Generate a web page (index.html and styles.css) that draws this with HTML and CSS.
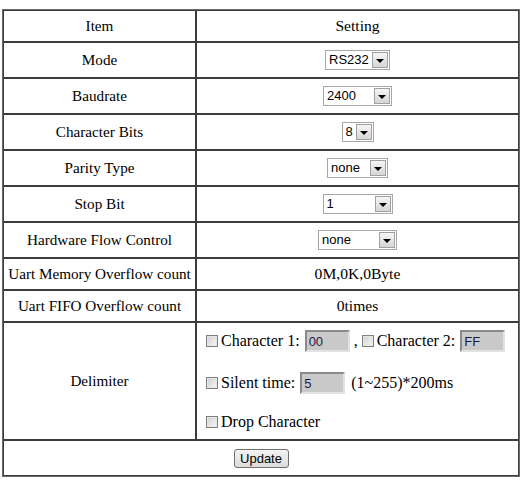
FILE: index.html
```html
<!DOCTYPE html>
<html lang="en">
<head>
  <meta charset="UTF-8">
  <title>Serial Port Setting</title>
  <link rel="stylesheet" href="styles.css">
</head>
<body>
  <form class="uart-form" onsubmit="return false;">
    <table class="setting-table">
      <colgroup>
        <col class="col-item">
        <col class="col-setting">
      </colgroup>
      <tr class="row-head">
        <td class="item">Item</td>
        <td>Setting</td>
      </tr>
      <tr class="row-sel">
        <td class="item">Mode</td>
        <td>
          <span class="combo"><select class="w-mode"><option>RS232</option><option>RS485</option><option>RS422</option></select></span>
        </td>
      </tr>
      <tr class="row-sel">
        <td class="item">Baudrate</td>
        <td>
          <span class="combo"><select class="w-baud"><option>2400</option><option>4800</option><option>9600</option><option>19200</option><option>38400</option><option>57600</option><option>115200</option></select></span>
        </td>
      </tr>
      <tr class="row-sel">
        <td class="item">Character Bits</td>
        <td>
          <span class="combo"><select class="w-bits"><option>8</option><option>7</option></select></span>
        </td>
      </tr>
      <tr class="row-sel">
        <td class="item">Parity Type</td>
        <td>
          <span class="combo"><select class="w-parity"><option>none</option><option>odd</option><option>even</option></select></span>
        </td>
      </tr>
      <tr class="row-sel">
        <td class="item">Stop Bit</td>
        <td>
          <span class="combo"><select class="w-stop"><option>1</option><option>2</option></select></span>
        </td>
      </tr>
      <tr class="row-sel">
        <td class="item">Hardware Flow Control</td>
        <td>
          <span class="combo"><select class="w-flow"><option>none</option><option>RTS/CTS</option></select></span>
        </td>
      </tr>
      <tr class="row-text">
        <td class="item">Uart Memory Overflow count</td>
        <td>0M,0K,0Byte</td>
      </tr>
      <tr class="row-text">
        <td class="item">Uart FIFO Overflow count</td>
        <td>0times</td>
      </tr>
      <tr class="row-delim">
        <td class="item">Delimiter</td>
        <td class="delim-cell">
          <div class="delim-line first">
            <input type="checkbox" class="cb">Character 1: <input type="text" class="hex" value="00"> , <input type="checkbox" class="cb">Character 2: <input type="text" class="hex" value="FF">
          </div>
          <div class="delim-line second">
            <input type="checkbox" class="cb">Silent time: <input type="text" class="hex silent" value="5"> (1~255)*200ms
          </div>
          <div class="delim-line third">
            <input type="checkbox" class="cb">Drop Character
          </div>
        </td>
      </tr>
      <tr class="row-update">
        <td colspan="2"><button type="button" class="update-btn">Update</button></td>
      </tr>
    </table>
  </form>
</body>
</html>
```

FILE: styles.css
```css
body {
  margin: 0;
  padding: 0;
  background: #fff;
  font-family: "Liberation Serif", "Times New Roman", serif;
  font-size: 16px;
  color: #000;
}
.uart-form {
  margin: 0;
}
.setting-table {
  margin: 9px 0 0 2px;
  width: 518px;
  table-layout: fixed;
  border-collapse: separate;
  border-spacing: 0;
  border: 1px solid #6b6b6b;
  font-size: 15.6px;
}
.col-item {
  width: 193px;
}
.setting-table td {
  box-sizing: border-box;
  border: 1px solid #3c3c3c;
  padding: 0;
  text-align: center;
  vertical-align: middle;
  white-space: nowrap;
}
.setting-table td.item {
  font-size: 15.2px;
}
.row-head td {
  height: 32px;
}
.row-sel td {
  height: 36px;
}
.row-text td {
  height: 32px;
}
.row-delim td {
  height: 118px;
}
.row-update td {
  height: 36px;
}

/* drop-down boxes */
.combo {
  position: relative;
  display: inline-block;
  vertical-align: middle;
  line-height: 0;
}
.combo select {
  -webkit-appearance: none;
  appearance: none;
  box-sizing: border-box;
  height: 20px;
  margin: 0;
  padding: 0 18px 0 3px;
  border: 1px solid #a7a7a7;
  border-radius: 0;
  background: #fff;
  color: #000;
  font-family: "Liberation Sans", Arial, sans-serif;
  font-size: 13px;
  line-height: 18px;
  outline: none;
}
.combo::after {
  content: "";
  position: absolute;
  top: 2px;
  right: 2px;
  bottom: 2px;
  width: 14px;
  border: 1px solid #a0a0a0;
  background: linear-gradient(#f6f6f6, #d6d6d6);
  pointer-events: none;
}
.combo::before {
  content: "";
  position: absolute;
  z-index: 1;
  top: 9px;
  right: 6px;
  border-left: 4px solid transparent;
  border-right: 4px solid transparent;
  border-top: 4px solid #000;
  pointer-events: none;
}
.w-mode { width: 65px; }
.w-baud { width: 69px; }
.w-bits { width: 32px; padding-left: 4px; }
.w-parity { width: 61px; }
.w-stop { width: 70px; }
.w-flow { width: 79px; }

/* delimiter block */
.setting-table td.delim-cell {
  font-size: 16px;
  text-align: left;
  vertical-align: top;
  padding: 7px 0 0 9px;
}
.delim-line {
  height: 22px;
  line-height: 22px;
}
.delim-line.second {
  margin-top: 20px;
}
.delim-line.third {
  margin-top: 17px;
}
.cb {
  -webkit-appearance: none;
  appearance: none;
  box-sizing: border-box;
  width: 12px;
  height: 12px;
  margin: 0 3px 0 0;
  vertical-align: -1px;
  border: 1px solid #7f7f7f;
  background: linear-gradient(135deg, #cfcfcf, #f7f7f7);
  box-shadow: inset 0 0 0 1px #e6e6e6;
}
.hex {
  box-sizing: border-box;
  width: 45px;
  height: 22px;
  margin: 0 0 0 1px;
  padding: 1px 2px 0;
  vertical-align: top;
  border: 2px solid;
  border-color: #8a8a8a #e2e2e2 #e2e2e2 #8a8a8a;
  background: #c9c9c9;
  color: #1a1a4a;
  font-family: "Liberation Sans", Arial, sans-serif;
  font-size: 13px;
  outline: none;
}
.hex.silent {
  margin-right: 2px;
}

/* update button */
.update-btn {
  box-sizing: border-box;
  width: 55px;
  height: 19px;
  margin: 0;
  padding: 0;
  border: 1px solid #707070;
  border-radius: 3px;
  background: linear-gradient(#f3f3f3, #dcdcdc);
  color: #000;
  font-family: "Liberation Sans", Arial, sans-serif;
  font-size: 13px;
  line-height: 17px;
  cursor: pointer;
}
```
